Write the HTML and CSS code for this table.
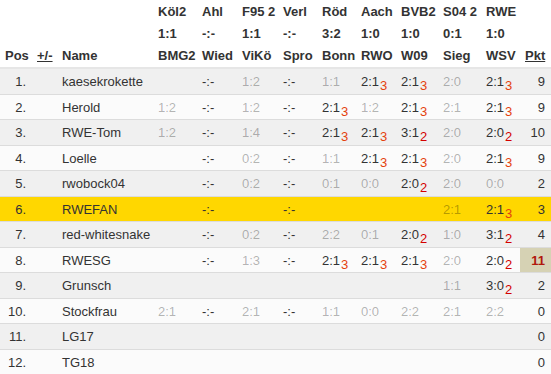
FILE: index.html
```html
<!DOCTYPE html>
<html>
  <head>
    <meta charset="utf-8" />
    <title>Tippspiel Tabelle</title>
    <link rel="stylesheet" href="styles.css">
  </head>
  <body>
    <table class="tipp-table">
      <colgroup>
        <col class="c-pos" />
        <col class="c-diff" />
        <col class="c-name" />
        <col class="c-g1" />
        <col class="c-g2" />
        <col class="c-g3" />
        <col class="c-g4" />
        <col class="c-g5" />
        <col class="c-g6" />
        <col class="c-g7" />
        <col class="c-g8" />
        <col class="c-g9" />
        <col class="c-pkt" />
      </colgroup>
      <thead>
        <tr>
          <th></th><th></th><th></th>
          <th>Köl2</th><th>Ahl</th><th>F95 2</th><th>Verl</th><th>Röd</th>
          <th>Aach</th><th>BVB2</th><th>S04 2</th><th>RWE</th><th></th>
        </tr>
        <tr>
          <th></th><th></th><th></th>
          <th>1:1</th><th>-:-</th><th>1:1</th><th>-:-</th><th>3:2</th>
          <th>1:0</th><th>1:0</th><th>0:1</th><th>1:0</th><th></th>
        </tr>
        <tr>
          <th class="pos-head">Pos</th><th><u>+/-</u></th><th>Name</th>
          <th>BMG2</th><th>Wied</th><th>ViKö</th><th>Spro</th><th>Bonn</th>
          <th>RWO</th><th>W09</th><th>Sieg</th><th>WSV</th><th class="pkt"><u>Pkt</u></th>
        </tr>
      </thead>
      <tbody id="rows"></tbody>
    </table>

    <script>
      // 'd' = not yet tipped, 'x:y|n' = tip with points, plain = tip without points
      var rows = [
        ['kaesekrokette', ['', 'd', '1:2', 'd', '1:1', '2:1|3', '2:1|3', '2:0', '2:1|3'], 9],
        ['Herold', ['1:2', 'd', '1:2', 'd', '2:1|3', '1:2', '2:1|3', '2:1', '2:1|3'], 9],
        ['RWE-Tom', ['1:2', 'd', '1:4', 'd', '2:1|3', '2:1|3', '3:1|2', '2:0', '2:0|2'], 10],
        ['Loelle', ['', 'd', '0:2', 'd', '1:1', '2:1|3', '2:1|3', '2:0', '2:1|3'], 9],
        ['rwobock04', ['', 'd', '0:2', 'd', '0:1', '0:0', '2:0|2', '2:0', '0:0'], 2],
        ['RWEFAN', ['', 'd', '', 'd', '', '', '', '2:1', '2:1|3'], 3, 'me'],
        ['red-whitesnake', ['', 'd', '0:2', 'd', '2:2', '0:1', '2:0|2', '1:0', '3:1|2'], 4],
        ['RWESG', ['', 'd', '1:3', 'd', '2:1|3', '2:1|3', '2:1|3', '2:0', '2:0|2'], 11, 'best'],
        ['Grunsch', ['', '', '', '', '', '', '', '1:1', '3:0|2'], 2],
        ['Stockfrau', ['2:1', 'd', '2:1', 'd', '1:1', '0:0', '2:2', '2:1', '2:2'], 0],
        ['LG17', ['', '', '', '', '', '', '', '', ''], 0],
        ['TG18', ['', '', '', '', '', '', '', '', ''], 0]
      ];

      var html = '';
      rows.forEach(function (r, i) {
        html += '<tr' + (r[3] === 'me' ? ' class="me"' : '') + '>';
        html += '<td class="pos">' + (i + 1) + '.</td><td></td>';
        html += '<td>' + r[0] + '</td>';
        r[1].forEach(function (tip) {
          if (tip === 'd') {
            html += '<td>-:-</td>';
          } else if (tip.indexOf('|') > -1) {
            var p = tip.split('|');
            html += '<td>' + p[0] + '<sub class="p' + p[1] + '">' + p[1] + '</sub></td>';
          } else {
            html += '<td class="miss">' + tip + '</td>';
          }
        });
        html += '<td class="pkt' + (r[3] === 'best' ? ' top' : '') + '">' + r[2] + '</td>';
        html += '</tr>';
      });
      document.getElementById('rows').innerHTML = html;
    </script>
  </body>
</html>
```

FILE: styles.css
```css
body {
  margin: 0;
  background: #fff;
  font-family: 'Liberation Sans', Arial, sans-serif;
  font-size: 13px;
  color: #333;
}

.tipp-table {
  width: 551px;
  border-collapse: collapse;
  table-layout: fixed;
}

.c-pos { width: 32px; }
.c-diff { width: 25px; }
.c-name { width: 96px; }
.c-g1 { width: 44px; }
.c-g2 { width: 40px; }
.c-g3 { width: 41px; }
.c-g4 { width: 39px; }
.c-g5 { width: 39px; }
.c-g6 { width: 40px; }
.c-g7 { width: 42px; }
.c-g8 { width: 43px; }
.c-g9 { width: 39px; }
.c-pkt { width: 31px; }

.tipp-table th {
  text-align: left;
  font-weight: bold;
  line-height: 15px;
  padding: 3px 5px 4px;
  white-space: nowrap;
}
.tipp-table thead tr:first-child th {
  padding-top: 4px;
}
.tipp-table thead tr:last-child th {
  border-bottom: 2px solid #e6e6e6;
}
.tipp-table th.pkt {
  text-align: right;
  padding-right: 6px;
}

.tipp-table td {
  line-height: 15px;
  padding: 5px 5px 4.5px;
  border-top: 1px solid #dcdcdc;
  white-space: nowrap;
  background: #fbfbfb;
}
.tipp-table tbody tr:nth-child(odd) td {
  background: #f0f0f0;
}
.tipp-table tbody tr:first-child td {
  border-top: none;
}
.tipp-table tbody tr:last-child td {
  border-bottom: 1px solid #dcdcdc;
}
.tipp-table tbody tr.me td {
  background: #ffd700;
}

.tipp-table td.pos {
  text-align: right;
  padding-right: 6px;
}
.tipp-table td.miss {
  color: rgba(0, 0, 0, 0.3);
}
.tipp-table td.pkt {
  text-align: right;
  padding-right: 6px;
}
.tipp-table tbody tr td.top {
  background: #d6d2b4;
  color: #b0180c;
  font-weight: bold;
}

sub {
  font-size: 13px;
  line-height: 0;
  vertical-align: -4px;
  margin-left: 1px;
}
sub.p3 {
  color: #e4410e;
}
sub.p2 {
  color: #d40000;
}
```
